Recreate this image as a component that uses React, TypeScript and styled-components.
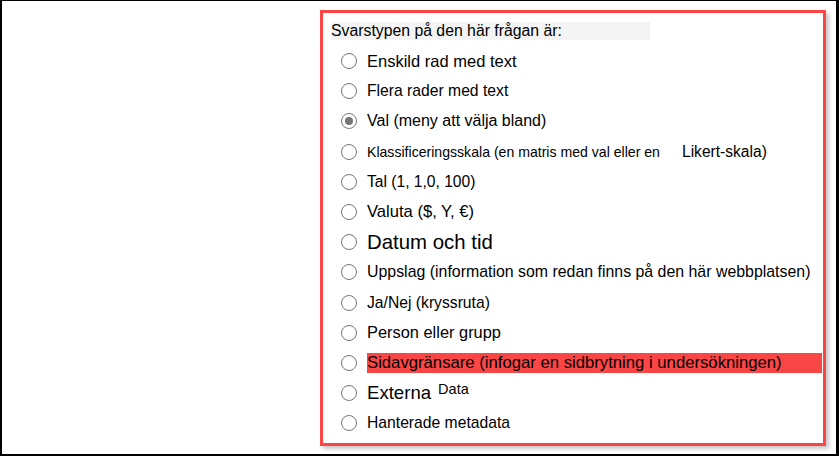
import React from 'react';
import styled, { createGlobalStyle } from 'styled-components';

const GlobalStyles = createGlobalStyle`
  html, body {
    margin: 0;
    padding: 0;
    background: #ffffff;
  }
  body {
    font-family: "Liberation Sans", Arial, sans-serif;
    color: #000000;
  }
`;

const Frame = styled('div')`
  box-sizing: border-box;
  width: 839px;
  height: 456px;
  border-style: solid;
  border-color: #000000;
  border-width: 1px 3px 2px 2px;
  background: #ffffff;
  padding: 9px 0 0 318px;
`;

const Panel = styled('div')`
  box-sizing: border-box;
  width: 506px;
  height: 436px;
  border: 3px solid #fb4646;
  box-shadow: 3px 3px 4px rgba(0, 0, 0, 0.22);
  padding: 9px 0 0 8px;
  display: flex;
  flex-direction: column;
`;

const Heading = styled('div')`
  width: 319px;
  height: 18px;
  background: #f4f4f4;
  font-size: 15.8px;
  line-height: 18px;
  margin-bottom: 6px;
`;

const Options = styled('div')`
  display: flex;
  flex-direction: column;
  padding-left: 10px;
`;

const Row = styled('label')`
  display: flex;
  align-items: center;
  height: 30.2px;
`;

const Radio = styled('span')<{ $checked?: boolean }>`
  box-sizing: border-box;
  flex: none;
  width: 16px;
  height: 16px;
  border-radius: 50%;
  border: 1.6px solid #777777;
  margin-right: 10px;
  display: flex;
  align-items: center;
  justify-content: center;
  &::after {
    content: '';
    display: ${(p) => (p.$checked ? 'block' : 'none')};
    width: 8px;
    height: 8px;
    border-radius: 50%;
    background: #767676;
  }
`;

const Label = styled('span')<{ $size?: number; $highlight?: boolean }>`
  font-size: ${(p) => p.$size ?? 16}px;
  white-space: nowrap;
  ${(p) =>
    p.$highlight
      ? `
    display: inline-block;
    width: 455px;
    height: 20px;
    line-height: 20px;
    background: #fb4646;
  `
      : ''}
`;

const Gap = styled('span')<{ $width: number }>`
  display: inline-block;
  width: ${(p) => p.$width}px;
`;

const Raised = styled('span')`
  font-size: 14.5px;
  position: relative;
  top: -4px;
  margin-left: 7px;
`;

export default function App() {
  return (
    <>
      <GlobalStyles />
      <Frame>
        <Panel>
          <Heading>Svarstypen på den här frågan är:</Heading>
          <Options>
            <Row>
              <Radio />
              <Label $size={16.5}>Enskild rad med text</Label>
            </Row>
            <Row>
              <Radio />
              <Label $size={15.7}>Flera rader med text</Label>
            </Row>
            <Row>
              <Radio $checked />
              <Label>Val (meny att välja bland)</Label>
            </Row>
            <Row>
              <Radio />
              <Label $size={14.1}>Klassificeringsskala (en matris med val eller en</Label>
              <Gap $width={22} />
              <Label $size={15.6}>Likert-skala)</Label>
            </Row>
            <Row>
              <Radio />
              <Label $size={15.6}>Tal (1, 1,0, 100)</Label>
            </Row>
            <Row>
              <Radio />
              <Label $size={16.6}>Valuta ($, Y, €)</Label>
            </Row>
            <Row>
              <Radio />
              <Label $size={20.4}>Datum och tid</Label>
            </Row>
            <Row>
              <Radio />
              <Label $size={15.9}>Uppslag (information som redan finns på den här webbplatsen)</Label>
            </Row>
            <Row>
              <Radio />
              <Label $size={15.7}>Ja/Nej (kryssruta)</Label>
            </Row>
            <Row>
              <Radio />
              <Label $size={16.4}>Person eller grupp</Label>
            </Row>
            <Row>
              <Radio />
              <Label $size={16.7} $highlight>
                Sidavgränsare (infogar en sidbrytning i undersökningen)
              </Label>
            </Row>
            <Row>
              <Radio />
              <Label $size={18.6}>Externa</Label>
              <Raised>Data</Raised>
            </Row>
            <Row>
              <Radio />
              <Label $size={15.7}>Hanterade metadata</Label>
            </Row>
          </Options>
        </Panel>
      </Frame>
    </>
  );
}
